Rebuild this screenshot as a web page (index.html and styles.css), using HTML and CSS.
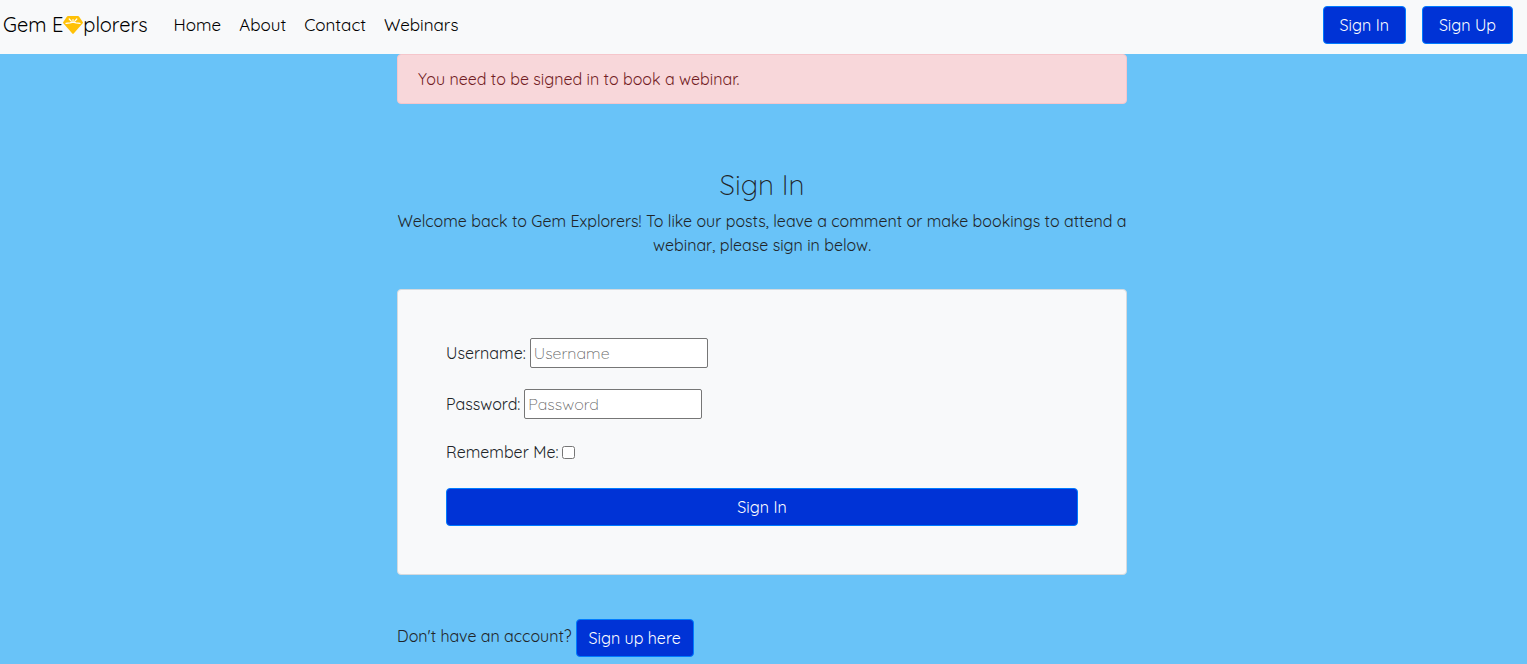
FILE: index.html
```html
<!DOCTYPE html>
<html lang="en">
<head>
<meta charset="utf-8">
<meta name="viewport" content="width=device-width, initial-scale=1">
<title>Gem Explorers - Sign In</title>
<link rel="stylesheet" href="styles.css">
</head>
<body>
<nav class="navbar">
  <a class="brand" href="#">Gem E<svg class="gem" viewBox="0 0 20 18" aria-hidden="true"><path fill="#ffc107" d="M5 0h10q.6 0 1 .6L19.700 6q.5.7 0 1.300l-9 10.300q-.7.7-1.400 0L.3 7.300Q-.2 6.700.3 6L4 .6Q4.400 0 5 0z"/><path fill="none" stroke="#fff" stroke-width="1.200" stroke-linecap="round" stroke-linejoin="round" d="M3 7.400l4-.6 3-.7 3 .7 4 .6M10 3.500v2M6.200 3l2 2.200M13.800 3l-2 2.200"/></svg>plorers</a>
  <ul class="links">
    <li><a href="#">Home</a></li>
    <li><a href="#">About</a></li>
    <li><a href="#">Contact</a></li>
    <li><a href="#">Webinars</a></li>
  </ul>
  <div class="account">
    <a class="btn btn-nav" href="#">Sign In</a>
    <a class="btn btn-nav" href="#">Sign Up</a>
  </div>
</nav>
<main class="page">
  <div class="alert" role="alert">You need to be signed in to book a webinar.</div>
  <header class="intro">
    <h1>Sign In</h1>
    <p>Welcome back to Gem Explorers! To like our posts, leave a comment or make bookings to attend a webinar, please sign in below.</p>
  </header>
  <form class="card">
    <div class="field"><label for="username">Username:</label><input class="text" id="username" type="text" placeholder="Username"></div>
    <div class="field"><label for="password">Password:</label><input class="text" id="password" type="password" placeholder="Password"></div>
    <div class="field"><label for="remember">Remember Me:</label><input class="check" id="remember" type="checkbox"></div>
    <button class="btn btn-submit" type="submit">Sign In</button>
  </form>
  <div class="signup"><span class="prompt">Don't have an account?</span><a class="btn" href="#">Sign up here</a></div>
</main>
</body>
</html>
```
FILE: styles.css
```css
* { box-sizing: border-box; }
body {
  margin: 0;
  background: #69c3f8;
  color: #212529;
  font: 400 16px/24px Quicksand, Lato, sans-serif;
}
a { color: inherit; text-decoration: none; }
.navbar {
  display: flex;
  align-items: center;
  padding: 6px 14px 10px 3px;
  background: #f8f9fa;
  color: #000;
}
.brand { font-size: 20px; margin-right: 26px; white-space: nowrap; }
.gem { width: 20px; height: 18px; vertical-align: -2px; }
.links {
  display: flex;
  gap: 18px;
  margin: 0;
  padding: 0;
  list-style: none;
  font-size: 17px;
}
.account { display: flex; gap: 16px; margin-left: auto; }
.btn {
  display: inline-block;
  padding: 6px 12px;
  border: 1px solid #007bff;
  border-radius: 4px;
  background: #0033d6;
  color: #fff;
  font: inherit;
  text-align: center;
}
.btn-nav { padding: 6px 16px; }
.btn-submit { margin-top: 3px; }
.page { max-width: 733px; margin: 0 auto; padding-right: 3px; }
.alert {
  padding: 12px 20px;
  border: 1px solid #f5c6cb;
  border-radius: 4px;
  background: #f8d7da;
  color: #721c24;
}
.intro { padding: 64px 0 32px; text-align: center; }
.intro h1 { margin: 0 0 8px; font-size: 28px; line-height: 33px; font-weight: 300; }
.intro p { margin: 0; }
.card {
  display: flex;
  flex-direction: column;
  gap: 21px;
  padding: 48px;
  border: 1px solid #d5dade;
  border-radius: 4px;
  background: #f8f9fa;
}
.field { display: flex; align-items: center; gap: 4px; }
.text {
  width: 178px;
  height: 30px;
  padding: 1px 3px;
  border: 1px solid #767676;
  border-radius: 2px;
  background: #fff;
  font: inherit;
  font-weight: 300;
}
.text::placeholder { color: #666; }
.check { width: 13px; height: 13px; margin: 0; }
.signup { display: flex; align-items: center; gap: 4px; padding: 44px 0 7px; }
.prompt { padding-bottom: 4px; }
```
